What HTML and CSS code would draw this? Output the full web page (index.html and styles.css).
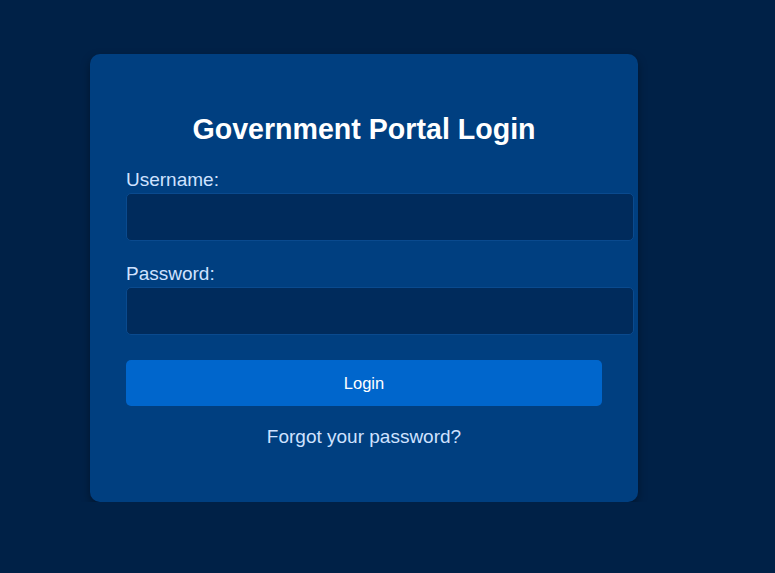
FILE: index.html
```html
<!DOCTYPE html>
<html lang="en">
<head>
<meta charset="utf-8">
<title>Government Portal Login</title>
<link rel="stylesheet" href="styles.css">
</head>
<body>
<main class="page">
  <div class="card">
    <h2 class="title">Government Portal Login</h2>
    <form class="form">
      <label class="label" for="username">Username:</label>
      <input class="input" id="username" type="text">
      <label class="label" for="password">Password:</label>
      <input class="input" id="password" type="password">
      <button class="btn" type="button">Login</button>
    </form>
    <p class="forgot"><a href="#" class="link">Forgot your password?</a></p>
  </div>
</main>
</body>
</html>
```

FILE: styles.css
```css
html, body {
  margin: 0;
  padding: 0;
  background: #002147;
  font-family: "Liberation Sans", Arial, sans-serif;
  min-height: 100%;
}
.page {
  padding: 54px 0 0 90px;
}
.card {
  box-sizing: border-box;
  width: 548px;
  background: #003f80;
  border-radius: 10px;
  padding: 36px;
  box-shadow: 0 4px 10px rgba(0, 0, 0, 0.35);
}
.title {
  margin: 23px 0 23px;
  font-size: 28.6px;
  line-height: 32px;
  font-weight: bold;
  text-align: center;
  color: #ffffff;
}
.form {
  display: block;
}
.label {
  display: block;
  font-size: 19px;
  line-height: 22px;
  padding-top: 1px;
  color: #cfe2ff;
  margin-bottom: 2px;
}
.input {
  display: block;
  width: 100%;
  box-sizing: content-box;
  padding: 14px 15px;
  height: 18px;
  font-size: 16px;
  border: 1px solid #0a4a8e;
  border-radius: 5px;
  background: #002b5c;
  color: #ffffff;
  margin: 0 0 21px;
  outline: none;
}
.btn {
  display: block;
  width: 100%;
  height: 46px;
  margin-top: 25px;
  border: none;
  border-radius: 5px;
  background: #0066cc;
  color: #ffffff;
  font-family: "Liberation Sans", Arial, sans-serif;
  font-size: 16.5px;
}
.forgot {
  margin: 20px 0 18px;
  text-align: center;
  font-size: 19px;
  line-height: 22px;
}
.link {
  color: #cfe2ff;
  text-decoration: none;
}
```
